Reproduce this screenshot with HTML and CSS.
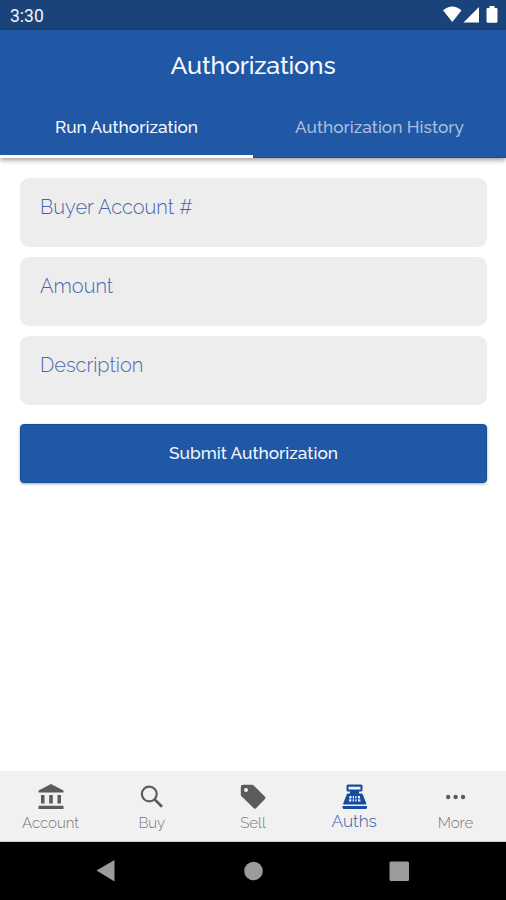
FILE: index.html
```html
<!DOCTYPE html>
<html lang="en">
<head>
<meta charset="utf-8">
<meta name="viewport" content="width=device-width, initial-scale=1">
<title>Authorizations</title>
<link rel="stylesheet" href="styles.css">
</head>
<body>
<div class="app">
  <div class="status">
    <span class="clock">3:30</span>
    <svg class="status-icons" width="56" height="18" viewBox="0 0 56 18" fill="#fff">
      <path d="M0 4.300Q9.300-3.300 18.600 4.300L9.300 16Z"/>
      <path d="M20.500 16.500 36 1V16.500Z"/>
      <path d="M46.500 0h5v2h2q1 0 1 1v12.500q0 1.300-1.300 1.300h-8.400q-1.300 0-1.300-1.300V3q0-1 1-1h2Z"/>
    </svg>
  </div>
  <header class="header">
    <h1 class="title">Authorizations</h1>
    <nav class="tabs">
      <a class="tab tab-active">Run Authorization</a>
      <a class="tab">Authorization History</a>
    </nav>
  </header>
  <main class="form">
    <div class="field">Buyer Account #</div>
    <div class="field">Amount</div>
    <div class="field">Description</div>
    <button class="submit">Submit Authorization</button>
  </main>
  <nav class="bottom">
    <a class="item">
      <svg width="28" height="28" viewBox="0 0 28 28" fill="#5c5c5c"><path d="M1.500 7.500 14 1l12.500 6.500V9.500h-25ZM4 12h3.500v8.500H4Zm8.200 0h3.600v8.500h-3.600Zm8.300 0H24v8.500h-3.500ZM1.500 22.800h25V26h-25Z"/></svg>
      <span>Account</span>
    </a>
    <a class="item">
      <svg width="28" height="28" viewBox="0 0 28 28" fill="none" stroke="#5c5c5c"><circle cx="11.300" cy="11" r="7.400" stroke-width="2.200"/><path d="m16.500 16.300 7.500 7.500" stroke-width="2.700"/></svg>
      <span>Buy</span>
    </a>
    <a class="item">
      <svg width="28" height="28" viewBox="0 0 28 28" fill="#5c5c5c" fill-rule="evenodd"><path d="M4 1.800h9q1 0 1.700.7L26 13.700q1.100 1.100 0 2.200L17 25.200q-1.100 1-2.200 0L2.500 13.200q-.7-.7-.7-1.700V4Q1.800 1.800 4 1.800ZM7 5A2 2 0 1 0 7 9 2 2 0 1 0 7 5Z"/></svg>
      <span>Sell</span>
    </a>
    <a class="item item-active">
      <svg width="28" height="28" viewBox="0 0 28 28" fill="#164ca0" fill-rule="evenodd"><path d="M8 1.500h13q1.500 0 1.500 1.500v4q0 1.500-1.500 1.500h-2V10.500h2.500q1 0 1.300 1l3.500 9q.3 1-.8 1H4q-1.100 0-.8-1l3.500-9q.3-1 1.300-1h2v-2H8Q6.500 8.500 6.500 7V3Q6.500 1.500 8 1.500ZM8.500 3.700v2.800h12V3.700ZM9.500 13l-.7 5.500h2.500l.3-5.500Zm3.300 0-.2 5.500h1.400V13Zm2.400 0v5.500h1.400l-.2-5.500Zm2.600 0 .3 5.500h2.500l-.7-5.500ZM2.500 23h24.500v1.500q0 1.500-1.500 1.500H4q-1.500 0-1.500-1.500Z"/><path d="M8.500 15.400h12.500v.9H8.500Z"/></svg>
      <span>Auths</span>
    </a>
    <a class="item">
      <svg width="28" height="28" viewBox="0 0 28 28" fill="#5c5c5c"><circle cx="7.200" cy="14" r="2.200"/><circle cx="14.600" cy="14" r="2.200"/><circle cx="22" cy="14" r="2.200"/></svg>
      <span>More</span>
    </a>
  </nav>
  <div class="system">
    <svg width="506" height="57" viewBox="0 0 506 57" fill="#9b9b9b"><path d="M96.500 28.500 114.500 18v21.500Z"/><circle cx="253.500" cy="29" r="9.300"/><rect x="389.500" y="19.500" width="19.500" height="19.500" rx="1.500"/></svg>
  </div>
</div>
</body>
</html>
```
FILE: styles.css
```css
* { box-sizing: border-box; }
body { margin: 0; background: #fff; font-family: Raleway, Lato, sans-serif; }
.app { width: 506px; height: 900px; display: flex; flex-direction: column; overflow: hidden; white-space: nowrap; }
.status { height: 30px; flex: none; background: #1a4379; display: flex; justify-content: space-between; padding: 6px 7px 0 10px; color: #f1f4ff; }
.clock { font: 400 17.500px/20px Roboto, sans-serif; }
.header { height: 128px; flex: none; background: #2058a5; color: #f4f7ff; box-shadow: 0 2px 5px rgba(0,0,0,.4); }
.title { margin: 0; height: 70px; text-align: center; font-size: 25px; line-height: 70px; font-weight: 500; letter-spacing: -.2px; }
.tabs { display: flex; height: 58px; }
.tab { flex: 1; text-align: center; font-size: 17.300px; line-height: 55px; font-weight: 500; color: #a9bee0; border-bottom: 1px solid #164b98; }
.tab-active { color: #f4f7ff; border-bottom: 3px solid #fff; }
.form { flex: 1; display: flex; flex-direction: column; gap: 10px; padding: 20px 19px 0 20px; }
.field { height: 69px; background: #ededed; border-radius: 9px; padding: 17px 20px; color: #4966ad; font-size: 20px; line-height: 24px; font-weight: 300; }
.submit { height: 59px; margin-top: 9px; padding: 0 0 1px; border: 1px solid #164f9f; border-radius: 4px; background: #2058a5; color: #f4f7ff; font-family: inherit; font-size: 17.300px; line-height: 24px; font-weight: 500; box-shadow: 0 1px 3px rgba(0,0,0,.35); }
.bottom { height: 71px; flex: none; background: #f1f1f1; border-bottom: 1px solid #ccc; display: flex; }
.item { flex: 1; display: flex; flex-direction: column; align-items: center; padding-top: 12px; font-size: 15px; line-height: 24px; font-weight: 300; color: #777; }
.item svg { display: block; flex: none; }
.item-active { color: #365eac; font-size: 17.300px; line-height: 21px; }
.system { height: 58px; flex: none; background: #000; }
.system svg { display: block; }
```
